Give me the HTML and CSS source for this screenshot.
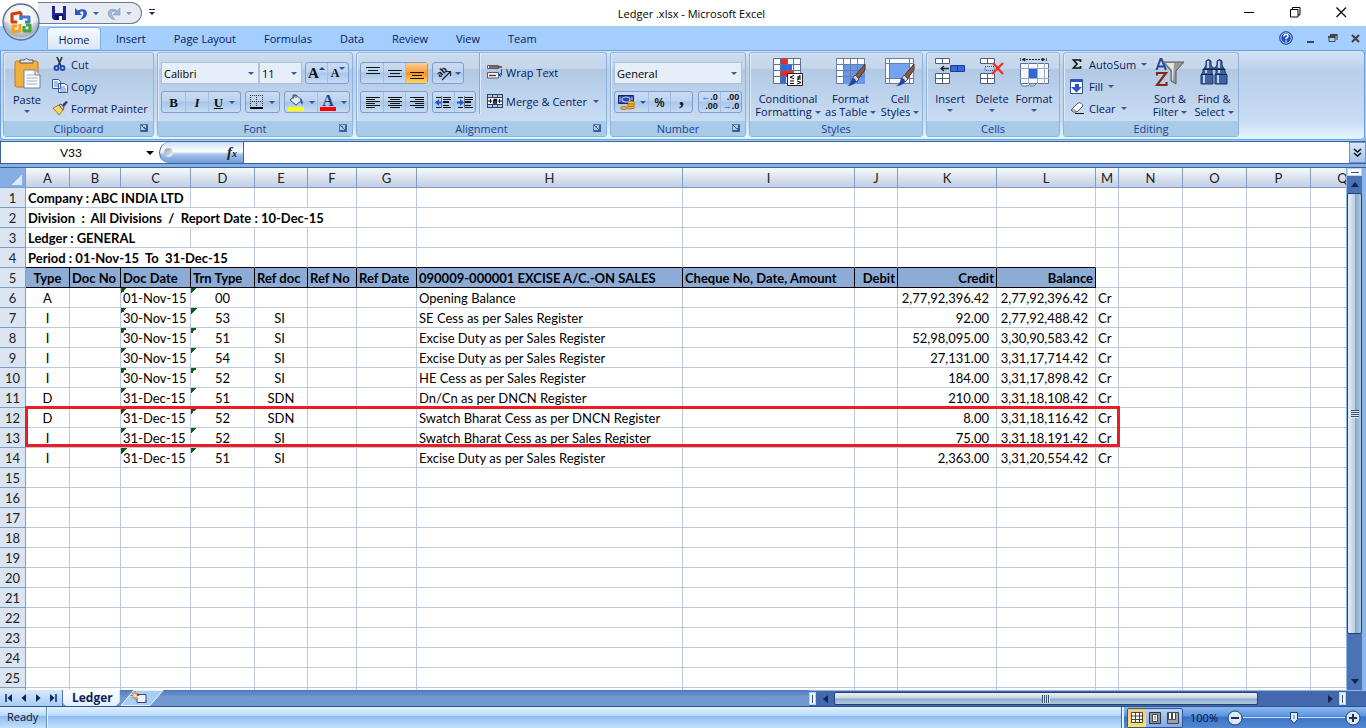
FILE: index.html
```html
<!DOCTYPE html>
<html lang="en">
<head>
<meta charset="utf-8">
<title>Ledger .xlsx - Microsoft Excel</title>
<link rel="stylesheet" href="styles.css">
</head>
<body>
<div class="app">
<header class="titlebar">
  <button class="office" aria-label="Office Button">
    <svg width="40" height="42" viewBox="0 0 40 42">
      <defs><radialGradient id="orb" cx=".5" cy=".35" r=".68"><stop offset="0" stop-color="#fff"/><stop offset=".5" stop-color="#e4e7ed"/><stop offset=".8" stop-color="#a4b0c2"/><stop offset="1" stop-color="#e8f2fb"/></radialGradient></defs>
      <circle cx="21" cy="22" r="18" fill="url(#orb)" stroke="#5c6f8c" stroke-width="1.3"/>
      <path d="M4 22a17 17 0 0 1 34 0q-17 5-34 0z" fill="#fff" opacity=".5"/>
      <g fill="none" stroke-width="3" stroke-linejoin="round">
        <path d="M21 19v-5l-1-1.500-8 1.500v8h5" stroke="#d8380c"/>
        <path d="M20 20v-3h8v5h-4" stroke="#3f7ad0" transform="translate(1 0)"/>
        <path d="M20 24v7l-7 1v-6h4" stroke="#f6a413"/>
        <path d="M24 26v5h6v-6h-4" stroke="#43a238"/>
      </g>
    </svg>
  </button>
  <div class="qat">
    <button aria-label="Save"><svg width="14" height="14" viewBox="0 0 14 14"><path d="M0 0h14v14H2l-2-2z" fill="#22229a"/><path d="M3 0h8v7H3z" fill="#e8f0fd"/><path d="M3 9h8v5H3z" fill="#11115c"/><path d="M7 10h3v4H7z" fill="#fff"/></svg></button>
    <button class="undo" aria-label="Undo"><svg width="14" height="13" viewBox="0 0 14 13"><path d="M1 1v7h7L5.500 5.500Q9 3 9.500 6 9.500 9 6 13q7-2 7-7Q12 0 3.500 3.500z" fill="#2b55c0"/></svg><i class="dd"></i></button>
    <button class="redo" aria-label="Redo"><svg width="14" height="13" viewBox="0 0 14 13"><path d="M13 1v7H6l2.500-2.500Q5 3 4.500 6 4.500 9 8 13 1 11 1 6 2 0 10.500 3.500z" fill="#a3b7d4" stroke="#7f98bd" stroke-width=".6"/></svg><i class="dd gray"></i></button>
  </div>
  <button class="qat-more" aria-label="Customize Quick Access Toolbar"><i class="dd dark"></i></button>
  <h1>Ledger .xlsx - Microsoft Excel</h1>
  <div class="winbtns">
    <button aria-label="Minimize"><svg width="11" height="11"><path d="M0 5.500h10" stroke="#000"/></svg></button>
    <button aria-label="Restore"><svg width="11" height="11"><path d="M.5 2.500h7.500v7.500H.5zM2.500 2.500v-2h7.500v7.500H8" fill="none" stroke="#000"/></svg></button>
    <button aria-label="Close"><svg width="11" height="11"><path d="M.5.500l9.500 9.500M10 .5L.5 10" stroke="#000" stroke-width="1.200"/></svg></button>
  </div>
</header>
<nav class="tabs">
  <button class="on">Home</button><button>Insert</button><button>Page Layout</button><button>Formulas</button><button>Data</button><button>Review</button><button>View</button><button>Team</button>
  <div class="docbtns">
    <button aria-label="Help"><svg width="14" height="14" viewBox="0 0 14 14"><circle cx="7" cy="7" r="6.300" fill="#1f50c6" stroke="#24479c"/><circle cx="7" cy="7" r="5.200" fill="none" stroke="#dbe8ff" stroke-width=".8"/><path d="M5 5.500q0-2 2-2t2 1.700Q9 6.300 7 7.200v1M7 9.500v1.300" fill="none" stroke="#fff" stroke-width="1.500"/></svg></button>
    <button aria-label="Minimize window"><svg width="9" height="11"><path d="M1 9h7" stroke="#444" stroke-width="2"/></svg></button>
    <button aria-label="Restore window"><svg width="10" height="11"><path d="M1 4h6v4.500H1z" fill="#a3ceff" stroke="#444"/><path d="M0 4h7.500M2 2h7.500" stroke="#444" stroke-width="2"/><path d="M9 2v5" stroke="#444"/></svg></button>
    <button aria-label="Close window"><svg width="9" height="11"><path d="M1 2l7 7M8 2L1 9" stroke="#444" stroke-width="2.200"/></svg></button>
  </div>
</nav>
<section class="ribbon">
  <section class="group clipboard"><div class="body">
    <button class="big"><svg width="27" height="31" viewBox="0 0 27 31"><rect x="1" y="3" width="23" height="26" rx="2" fill="#f0ae3c" stroke="#bd7d1c"/><path d="M6 5V2h4q2.500-3 5 0h4v3z" fill="#e8e8e8" stroke="#555"/><path d="M10 12h11l5 5v13H10z" fill="#fff" stroke="#6f8095"/><path d="M12.500 17h8M12.500 20h11M12.500 23h11M12.500 26h11" stroke="#94a9c4"/><path d="M21 12v5h5" fill="#dfe8f3" stroke="#6f8095"/></svg><span>Paste</span><i class="dd"></i></button>
    <div class="stack">
      <button><svg width="16" height="16" viewBox="0 0 16 16"><path d="M5 1l4 9M10 1l-4 9" stroke="#333c55" stroke-width="1.800"/><g fill="none" stroke="#2347b8" stroke-width="1.900"><circle cx="4.500" cy="12" r="2"/><circle cx="10.500" cy="12" r="2"/></g></svg>Cut</button>
      <button><svg width="16" height="16" viewBox="0 0 16 16"><path d="M.5 1.500h6l2 2v7h-8zM6.500 5.500h6l3 2v7h-9z" fill="#fff" stroke="#31559f"/><path d="M2 4h4M2 6h4M2 8h4M8 9h5M8 11h6M8 13h6" stroke="#4f7fd6"/></svg>Copy</button>
      <button><svg width="16" height="16" viewBox="0 0 16 16"><path d="M1 8l6-3 4 5-4 5q-2-3-6-7z" fill="#f6d766" stroke="#a87c25"/><path d="M7 5l2-1 3 4-1 2z" fill="#e9e9e9" stroke="#555"/><path d="M10 5l4-4 2 1-4 5z" fill="#40307f"/></svg>Format Painter</button>
    </div></div>
    <footer>Clipboard<button class="launch" aria-label="Clipboard options"></button></footer>
  </section>
  <section class="group font"><div class="body rows">
    <div class="row">
      <label class="combo face"><select aria-label="Font"><option>Calibri</option></select><i class="dd"></i></label>
      <label class="combo size"><select aria-label="Font size"><option>11</option></select><i class="dd"></i></label>
      <div class="bg last w22"><button class="serif grow" aria-label="Grow font">A<i class="dd up"></i></button><button class="serif shrink" aria-label="Shrink font">A<i class="dd"></i></button></div>
    </div>
    <div class="row">
      <div class="bg biu"><button class="serif"><b>B</b></button><button class="serif"><em>I</em></button><button class="serif under"><u>U</u><i class="dd"></i></button></div>
      <div class="bg"><button class="split" aria-label="Borders"><svg width="14" height="14"><path d="M.5 0v12M6.500 0v12M12.500 0v12M0 .5h13M0 6.500h13" stroke="#333" stroke-dasharray="1 1"/><path d="M0 13h13" stroke="#000" stroke-width="2"/></svg><i class="dd"></i></button></div>
      <div class="bg last"><button class="split" aria-label="Fill color"><svg width="16" height="17"><path d="M2 6l6-5 6 5-6 5z" fill="#e4ecf7" stroke="#374a6f"/><path d="M5 5V1h3v3" fill="none" stroke="#374a6f"/><path d="M12 5q4 1 2.500 6Q12 9 12 5z" fill="#2c5cc8"/><path d="M0 13h16v4H0z" fill="#ff0"/></svg><i class="dd"></i></button><button class="split serif" aria-label="Font color"><span class="fc">A</span><i class="dd"></i></button></div>
    </div></div>
    <footer>Font<button class="launch" aria-label="Font options"></button></footer>
  </section>
  <section class="group align"><div class="body">
    <div class="rows">
      <div class="row">
        <div class="bg w23"><button aria-label="Top align"><svg width="15" height="14"><path d="M1 1.500h14M3 4.500h10M1 7.500h14" stroke="#111"/></svg></button><button aria-label="Middle align"><svg width="15" height="14"><path d="M1 4.500h14M3 7.500h10M1 10.500h14" stroke="#111"/></svg></button><button class="sel" aria-label="Bottom align"><svg width="15" height="14"><path d="M1 6.500h14M3 9.500h10M1 12.500h14" stroke="#111"/></svg></button></div>
        <div class="bg"><button class="split orient" aria-label="Orientation"><svg width="18" height="18" viewBox="0 0 18 18"><path d="M7 16l8-8M11 7.500h4.500V12" fill="none" stroke="#222" stroke-width="1.200"/><text x="0" y="0" transform="translate(5 14) rotate(-45)" class="ab">ab</text></svg><i class="dd"></i></button></div>
      </div>
      <div class="row">
        <div class="bg w23"><button aria-label="Align left"><svg width="15" height="13"><path d="M1 1.500h14M1 3.500h9M1 5.500h14M1 7.500h9M1 9.500h14M1 11.500h9" stroke="#111"/></svg></button><button aria-label="Center"><svg width="15" height="13"><path d="M1 1.500h14M3 3.500h10M1 5.500h14M3 7.500h10M1 9.500h14M3 11.500h10" stroke="#111"/></svg></button><button aria-label="Align right"><svg width="15" height="13"><path d="M1 1.500h14M6 3.500h9M1 5.500h14M6 7.500h9M1 9.500h14M6 11.500h9" stroke="#111"/></svg></button></div>
        <div class="bg w22"><button aria-label="Decrease indent"><svg width="17" height="13"><path d="M1 1.500h5M8 1.500h8M8 3.500h8M8 6h5M8 9.500h6M1 11.500h5M8 11.500h8" stroke="#111"/><path d="M8 6h6" stroke="#111" stroke-width="2"/><path d="M6.500.500v12" stroke="#111" stroke-dasharray="1 1"/><path d="M6 6.500H2" stroke="#2753c4" stroke-width="2"/><path d="M4 3v7L0 6.500z" fill="#2753c4"/></svg></button><button aria-label="Increase indent"><svg width="17" height="13"><path d="M1 1.500h5M8 1.500h8M8 3.500h8M8 9.500h6M1 11.500h5M8 11.500h8" stroke="#111"/><path d="M8 6h6" stroke="#111" stroke-width="2"/><path d="M7.500.500v12" stroke="#111" stroke-dasharray="1 1"/><path d="M0 6.500h4" stroke="#2753c4" stroke-width="2"/><path d="M3 3v7l4-3.500z" fill="#2753c4"/></svg></button></div>
      </div>
    </div>
    <div class="wrapcol">
      <button><svg width="16" height="16" viewBox="0 0 16 16"><path d="M.5 1.500h11v3H.5zM.5 8.500h11v5.500H.5z" fill="#fff" stroke="#4b5c7d"/><path d="M2 3h13M2 11.500h7" stroke="#7a2c1d" stroke-width="1.400"/><path d="M14.500 5v6h-2M14 9l-2 2 2 2" fill="none" stroke="#274a9b"/></svg>Wrap Text</button>
      <button><svg width="16" height="16" viewBox="0 0 16 16"><path d="M0 1h16v14H0z" fill="#2c3f66"/><path d="M1 2h4v2H1zM6 2h4v2H6zM11 2h4v2h-4zM1 12h4v2H1zM6 12h4v2H6zM11 12h4v2h-4z" fill="#b8c9e2"/><path d="M1 5h14v6H1z" fill="#fff"/><path d="M1 8h4M15 8h-4M3.500 6v4M12.500 6v4" stroke="#111"/><path d="M6.500 6.500h3v3.500h-3V8h3" fill="none" stroke="#111" stroke-width="1.300"/></svg>Merge &amp; Center<i class="dd"></i></button>
    </div></div>
    <footer>Alignment<button class="launch" aria-label="Alignment options"></button></footer>
  </section>
  <section class="group number"><div class="body rows">
    <div class="row"><label class="combo fmt"><select aria-label="Number format"><option>General</option></select><i class="dd"></i></label></div>
    <div class="row">
      <div class="bg w23"><button class="split cur" aria-label="Accounting format"><svg width="17" height="16" viewBox="0 0 17 16"><path d="M.5 1.500h15v8H.5z" fill="#2747a5" stroke="#15275f"/><ellipse cx="8" cy="5.500" rx="4" ry="2.500" fill="none" stroke="#b6cdf6" stroke-width="1.200"/><path d="M2 3v5M14 3v3" stroke="#b6cdf6"/><g fill="#f6b73c" stroke="#a4650e" stroke-width=".8"><ellipse cx="13" cy="13.500" rx="3.500" ry="1.500"/><ellipse cx="13" cy="11" rx="3.500" ry="1.500"/><ellipse cx="13" cy="8.500" rx="3.500" ry="1.500"/><ellipse cx="6" cy="14" rx="3.500" ry="1.500"/></g></svg><i class="dd"></i></button><button class="pct">%</button><button class="serif comma">,</button></div>
      <div class="bg last w22 dec"><button aria-label="Increase decimal"><span><b>←</b>.0<br>.00</span></button><button aria-label="Decrease decimal"><span>.00<br><b>→</b>.0</span></button></div>
    </div></div>
    <footer>Number<button class="launch" aria-label="Number options"></button></footer>
  </section>
  <section class="group styles"><div class="body">
    <button class="big"><svg width="30" height="30" viewBox="0 0 30 30"><path d="M.5.500h27v25H.5z" fill="#f7fafe" stroke="#5c6f94"/><path d="M8 1h6v5H8zM8 13h12v6H8z" fill="#ef2a1c"/><path d="M8 7h11v5H8zM8 19h5v6H8z" fill="#3568dd"/><path d="M7.500 0v26M14.500 0v26M20.500 0v26M0 6.500h28M0 12.500h28M0 18.500h28" stroke="#5c6f94"/><path d="M14.500 15.500h15v12h-15z" fill="#fff" stroke="#222"/><path d="M21 17.500l-4 1.700 4 1.700M17 23h4M24 19h4M24 21h4M27 17l-2 5M17 25.500h4M24 23l4 1.500-4 1.500" fill="none" stroke="#000"/></svg><span>Conditional<br>Formatting <i class="dd"></i></span></button>
    <button class="big"><svg width="30" height="30" viewBox="0 0 30 30"><path d="M.5.500h28v25H.5z" fill="#f7fafe" stroke="#6b7d9e"/><path d="M7 7h22v19H7z" fill="#6597ef"/><path d="M7.500 0v26M14.500 0v26M21.500 0v26M0 6.500h29M0 12.500h29M0 18.500h29" stroke="#6b7d9e"/><path d="M29 6L19 18l3 3 7-9z" fill="#8a5b3c" stroke="#463226"/><path d="M19 17l4 4-3 3-4-3z" fill="#d6d6d6" stroke="#555"/><path d="M16 20q4 0 4 4-3 4-9 4 4-2 5-8z" fill="#2145a5"/></svg><span>Format<br>as Table <i class="dd"></i></span></button>
    <button class="big"><svg width="30" height="30" viewBox="0 0 30 30"><path d="M.5.500h28v25H.5z" fill="#f7fafe" stroke="#6b7d9e"/><path d="M5 5h19v16H5z" fill="#76a2f3"/><path d="M4.500 0v26M24.500 0v26M0 5.500h29M0 20.500h29" stroke="#6b7d9e"/><path d="M29 6L19 18l3 3 7-9z" fill="#8a5b3c" stroke="#463226"/><path d="M19 17l4 4-3 3-4-3z" fill="#d6d6d6" stroke="#555"/><path d="M16 20q4 0 4 4-3 4-9 4 4-2 5-8z" fill="#2145a5"/></svg><span>Cell<br>Styles <i class="dd"></i></span></button></div>
    <footer>Styles</footer>
  </section>
  <section class="group cells"><div class="body">
    <button class="big"><svg width="31" height="30" viewBox="0 0 31 30"><path d="M.5.500h14v5H.5zM7.500 0v6M.5 15.500h14v10H.5zM7.500 15v11M0 20.500h15" fill="#fff" stroke="#4e5f82"/><path d="M15.500 7.500h14v6h-14zM22.500 7v7" fill="#3769d9" stroke="#1f3d8c"/><path d="M14 10.500H6M9 8l-3 2.500L9 13" fill="none" stroke="#222" stroke-width="1.300"/></svg><span>Insert</span><i class="dd"></i></button>
    <button class="big"><svg width="31" height="30" viewBox="0 0 31 30"><path d="M3.500.500h14v5h-14zM10.500 0v6M3.500 15.500h14v10h-14zM10.500 15v11M3 20.500h15" fill="#fff" stroke="#4e5f82"/><path d="M8 8.500h9v4H8z" fill="none" stroke="#2552c0" stroke-dasharray="1 1"/><path d="M16 5l10 11M26 5L15 16" stroke="#ee3323" stroke-width="2.400"/></svg><span>Delete</span><i class="dd"></i></button>
    <button class="big"><svg width="31" height="30" viewBox="0 0 31 30"><path d="M4 1.500h21" stroke="#222" stroke-dasharray="2 1"/><path d="M1.500 0v3M27.500 0v3M6 0L3 1.500 6 3zM23 0l3 1.500L23 3z" fill="#222" stroke="#222" stroke-width=".7"/><path d="M1.500 5.500h28v20h-28z" fill="#f7fafe" stroke="#5c6f94"/><path d="M10 11h8v9h-8z" fill="#3566d8"/><path d="M9.500 5v21M18.500 5v21M25.500 5v21M1 10.500h29M1 20.500h29" stroke="#9babc6"/><path d="M2 26q0 2 2 2h5l2-2M11 28h4l2-2" fill="#f7fafe" stroke="#5c6f94"/></svg><span>Format</span><i class="dd"></i></button></div>
    <footer>Cells</footer>
  </section>
  <section class="group editing"><div class="body">
    <div class="stack">
      <button><svg width="14" height="16" viewBox="0 0 14 16"><path d="M10.500 6V4H3.500L7 8l-3.500 4h7v-2" fill="none" stroke="#111" stroke-width="1.700"/></svg>AutoSum<i class="dd"></i></button>
      <button><svg width="14" height="16" viewBox="0 0 14 16"><path d="M.5 1.500h12v14H.5z" fill="#fff" stroke="#31508c"/><path d="M1 1h11v3H1z" fill="#2a56be"/><path d="M5 6h4v3h3l-5.500 5.500L1 9h4z" fill="#2456d4"/></svg>Fill<i class="dd"></i></button>
      <button><svg width="14" height="16" viewBox="0 0 14 16"><path d="M1 10l7-7q4-1 5 3l-6 6q-5 1-6-2z" fill="#fff" stroke="#59616f"/><path d="M1 10q4-1 6 2" fill="none" stroke="#59616f"/><path d="M5 13.500h9" stroke="#000"/></svg>Clear<i class="dd"></i></button>
    </div>
    <button class="big"><svg width="30" height="30" viewBox="0 0 30 30"><path d="M1.500 12L5.500 1h1l4.500 11M3 8.500h6.500" fill="none" stroke="#26489f" stroke-width="2"/><path d="M2 17.500V15h9L2 27h9.500v-3" fill="none" stroke="#87261c" stroke-width="2.200"/><path d="M8 4h21l-8 9v13l-5-3V13z" fill="#9a9a98" stroke="#5a5a58"/><path d="M11 5h8l-1 18-1-1V12z" fill="#e3e3e0"/></svg><span>Sort &amp;<br>Filter <i class="dd"></i></span></button>
    <button class="big"><svg width="30" height="30" viewBox="0 0 30 30"><g fill="#41639f" stroke="#1e3466"><path d="M7 3q2.500-3 5 0v4l2 3h2l2-3V3q2.500-3 5 0v4l2 4H5l2-4z"/><path d="M4 11h9v4l1 2v9H2v-9l2-3zM17 11h9v3l2 3v9H16v-9l1-2z"/></g><path d="M2 16.500h12M16 16.500h12M4 11.500h22" stroke="#122349"/><path d="M5 17v8M19 17v8M9 3v7M20 3v7M7 12v3M20 12v3" stroke="#bcd0f2" stroke-width="2"/></svg><span>Find &amp;<br>Select <i class="dd"></i></span></button></div>
    <footer>Editing</footer>
  </section>
</section>
<div class="formula">
  <label class="namebox"><input value="V33" aria-label="Name Box"><i class="dd black"></i></label>
  <div class="fxbar"><i class="knob"></i><button class="fx" aria-label="Insert Function">f<sub>x</sub></button></div>
  <input class="fin" aria-label="Formula bar">
  <button class="expand" aria-label="Expand formula bar"><svg width="9" height="10"><path d="M1 1l3.500 3L8 1M1 5l3.500 3L8 5" fill="none" stroke="#111" stroke-width="1.600"/></svg></button>
</div>
<main class="work">
  <div class="sheet">
  <table>
    <colgroup><col class="c-r"><col class="c-a"><col class="c-b"><col class="c-c"><col class="c-d"><col class="c-e"><col class="c-f"><col class="c-g"><col class="c-h"><col class="c-i"><col class="c-j"><col class="c-k"><col class="c-k"><col class="c-m"><col class="c-n"><col class="c-n"><col class="c-n"><col class="c-n"></colgroup>
    <thead><tr><th class="corner"></th><th>A</th><th>B</th><th>C</th><th>D</th><th>E</th><th>F</th><th>G</th><th>H</th><th>I</th><th>J</th><th>K</th><th>L</th><th>M</th><th>N</th><th>O</th><th>P</th><th>Q</th></tr></thead>
    <tbody>
    <tr><th>1</th><td colspan="3" class="t">Company : ABC INDIA LTD</td><td></td><td></td><td></td><td></td><td></td><td></td><td></td><td></td><td></td><td></td><td></td><td></td><td></td><td></td></tr>
    <tr><th>2</th><td colspan="6" class="t">Division&nbsp; :&nbsp; All Divisions&nbsp; /&nbsp; Report Date : 10-Dec-15</td><td></td><td></td><td></td><td></td><td></td><td></td><td></td><td></td><td></td><td></td><td></td></tr>
    <tr><th>3</th><td colspan="3" class="t">Ledger : GENERAL</td><td></td><td></td><td></td><td></td><td></td><td></td><td></td><td></td><td></td><td></td><td></td><td></td><td></td><td></td></tr>
    <tr><th>4</th><td colspan="4" class="t k">Period : 01-Nov-15&nbsp; To&nbsp; 31-Dec-15</td><td class="k"></td><td class="k"></td><td class="k"></td><td class="k"></td><td class="k"></td><td class="k"></td><td class="k"></td><td class="k"></td><td></td><td></td><td></td><td></td><td></td></tr>
    <tr class="head"><th>5</th><td class="c">Type</td><td>Doc No</td><td>Doc Date</td><td>Trn Type</td><td>Ref doc</td><td>Ref No</td><td>Ref Date</td><td>090009-000001 EXCISE A/C.-ON SALES</td><td>Cheque No, Date, Amount</td><td class="r">Debit</td><td class="r">Credit</td><td class="r">Balance</td><td class="p"></td><td class="p"></td><td class="p"></td><td class="p"></td><td class="p"></td></tr>
    <tr><th>6</th><td class="c">A</td><td></td><td class="x">01-Nov-15</td><td class="x c">00</td><td></td><td></td><td></td><td>Opening Balance</td><td></td><td></td><td class="n">2,77,92,396.42</td><td class="n">2,77,92,396.42</td><td>Cr</td><td></td><td></td><td></td><td></td></tr>
    <tr><th>7</th><td class="c">I</td><td></td><td class="x">30-Nov-15</td><td class="x c">53</td><td class="c s">SI</td><td></td><td></td><td>SE Cess as per Sales Register</td><td></td><td></td><td class="n">92.00</td><td class="n">2,77,92,488.42</td><td>Cr</td><td></td><td></td><td></td><td></td></tr>
    <tr><th>8</th><td class="c">I</td><td></td><td class="x">30-Nov-15</td><td class="x c">51</td><td class="c s">SI</td><td></td><td></td><td>Excise Duty as per Sales Register</td><td></td><td></td><td class="n">52,98,095.00</td><td class="n">3,30,90,583.42</td><td>Cr</td><td></td><td></td><td></td><td></td></tr>
    <tr><th>9</th><td class="c">I</td><td></td><td class="x">30-Nov-15</td><td class="x c">54</td><td class="c s">SI</td><td></td><td></td><td>Excise Duty as per Sales Register</td><td></td><td></td><td class="n">27,131.00</td><td class="n">3,31,17,714.42</td><td>Cr</td><td></td><td></td><td></td><td></td></tr>
    <tr><th>10</th><td class="c">I</td><td></td><td class="x">30-Nov-15</td><td class="x c">52</td><td class="c s">SI</td><td></td><td></td><td>HE Cess as per Sales Register</td><td></td><td></td><td class="n">184.00</td><td class="n">3,31,17,898.42</td><td>Cr</td><td></td><td></td><td></td><td></td></tr>
    <tr><th>11</th><td class="c">D</td><td></td><td class="x">31-Dec-15</td><td class="x c">51</td><td class="c">SDN</td><td></td><td></td><td>Dn/Cn as per DNCN Register</td><td></td><td></td><td class="n">210.00</td><td class="n">3,31,18,108.42</td><td>Cr</td><td></td><td></td><td></td><td></td></tr>
    <tr><th>12</th><td class="c">D</td><td></td><td class="x">31-Dec-15</td><td class="x c">52</td><td class="c">SDN</td><td></td><td></td><td>Swatch Bharat Cess as per DNCN Register</td><td></td><td></td><td class="n">8.00</td><td class="n">3,31,18,116.42</td><td>Cr</td><td></td><td></td><td></td><td></td></tr>
    <tr><th>13</th><td class="c">I</td><td></td><td class="x">31-Dec-15</td><td class="x c">52</td><td class="c s">SI</td><td></td><td></td><td>Swatch Bharat Cess as per Sales Register</td><td></td><td></td><td class="n">75.00</td><td class="n">3,31,18,191.42</td><td>Cr</td><td></td><td></td><td></td><td></td></tr>
    <tr><th>14</th><td class="c">I</td><td></td><td class="x">31-Dec-15</td><td class="x c">51</td><td class="c s">SI</td><td></td><td></td><td>Excise Duty as per Sales Register</td><td></td><td></td><td class="n">2,363.00</td><td class="n">3,31,20,554.42</td><td>Cr</td><td></td><td></td><td></td><td></td></tr>
    <tr><th>15<td><td><td><td><td><td><td><td><td><td><td><td><td><td><td><td><td></tr>
    <tr><th>16<td><td><td><td><td><td><td><td><td><td><td><td><td><td><td><td><td></tr>
    <tr><th>17<td><td><td><td><td><td><td><td><td><td><td><td><td><td><td><td><td></tr>
    <tr><th>18<td><td><td><td><td><td><td><td><td><td><td><td><td><td><td><td><td></tr>
    <tr><th>19<td><td><td><td><td><td><td><td><td><td><td><td><td><td><td><td><td></tr>
    <tr><th>20<td><td><td><td><td><td><td><td><td><td><td><td><td><td><td><td><td></tr>
    <tr><th>21<td><td><td><td><td><td><td><td><td><td><td><td><td><td><td><td><td></tr>
    <tr><th>22<td><td><td><td><td><td><td><td><td><td><td><td><td><td><td><td><td></tr>
    <tr><th>23<td><td><td><td><td><td><td><td><td><td><td><td><td><td><td><td><td></tr>
    <tr><th>24<td><td><td><td><td><td><td><td><td><td><td><td><td><td><td><td><td></tr>
    <tr><th>25<td><td><td><td><td><td><td><td><td><td><td><td><td><td><td><td><td></tr>
    <tr><th><td><td><td><td><td><td><td><td><td><td><td><td><td><td><td><td><td></tr>
    </tbody>
  </table>
  <div class="mark"></div>
  </div>
  <div class="vscroll"><i class="vsplit"></i><button aria-label="Scroll up"><i class="tri up"></i></button><div class="vthumb"><i class="grip"></i></div><button aria-label="Scroll down"><i class="tri"></i></button></div>
</main>
<div class="sheetbar">
  <div class="navs">
    <button aria-label="First sheet"><svg width="8" height="8"><path d="M1 0v8" stroke="#0a2460" stroke-width="1.500"/><path d="M7 0v8L2.500 4z" fill="#0a2460"/></svg></button>
    <button aria-label="Previous sheet"><svg width="8" height="8"><path d="M6 0v8L1.500 4z" fill="#0a2460"/></svg></button>
    <button aria-label="Next sheet"><svg width="8" height="8"><path d="M2 0v8l4.500-4z" fill="#0a2460"/></svg></button>
    <button aria-label="Last sheet"><svg width="8" height="8"><path d="M7 0v8" stroke="#0a2460" stroke-width="1.500"/><path d="M1 0v8l4.500-4z" fill="#0a2460"/></svg></button>
  </div>
  <div class="stabs"><button class="stab">Ledger</button><button class="snew" aria-label="Insert Worksheet"><svg width="45" height="16"><path d="M13.500.500H43L30 15.500H1z" fill="#a9cdf5" stroke="#e6f1fd"/><path d="M16 4.500h10v8h-9v-4" fill="#f2f6fb" stroke="#3b4c70"/><path d="M26 10v2.500h-2.500" stroke="#3b4c70" fill="#bccbe0"/><path d="M15 1v9M10.500 5.500h9M12 2.500l6 6M18 2.500l-6 6" stroke="#d9661b"/><circle cx="15" cy="5.500" r="1.800" fill="#ffe9a8"/></svg></button></div>
  <div class="hscroll"><i class="hsplit"></i><button aria-label="Scroll left"><i class="tri left"></i></button><div class="htrack"><div class="hthumb"><i class="grip v"></i></div></div><button aria-label="Scroll right"><i class="tri right"></i></button><i class="hsplit"></i></div>
</div>
<footer class="status">
  <span class="ready">Ready</span>
  <div class="zoomarea">
    <div class="views">
      <button class="on" aria-label="Normal"><svg width="13" height="12"><path d="M.5.500h11v10H.5zM4.500 0v11M8.500 0v11M0 4h12M0 7.500h12" fill="#fff" stroke="#4c4030"/></svg></button>
      <button aria-label="Page Layout view"><svg width="13" height="12"><path d="M.5.500h11v11H.5z" fill="#8c93a0" stroke="#333"/><path d="M3.500 2.500h5v7h-5z" fill="#fff" stroke="#444"/><path d="M5 5h2M5 7h2" stroke="#666"/></svg></button>
      <button aria-label="Page Break Preview"><svg width="13" height="12"><path d="M.5.500h11v11H.5z" fill="#9aa1ad" stroke="#444"/><path d="M1.500.500h3v7h-3zM5.500.500h3v7h-3z" fill="#fff" stroke="#444"/></svg></button>
    </div>
    <button class="pc">100%</button>
    <button class="round" aria-label="Zoom out"><svg width="16" height="16"><circle cx="8" cy="8" r="7" fill="#dce9f9" stroke="#23406f"/><path d="M4 8h8" stroke="#1d2f50" stroke-width="2"/></svg></button>
    <div class="slider"><svg width="10" height="14"><path d="M1.500 1.500h7v7L5 12.500 1.500 8.500z" fill="#dfeafb" stroke="#1f3d75"/><path d="M5 4v4" stroke="#4a76c4"/></svg></div>
    <button class="round" aria-label="Zoom in"><svg width="16" height="16"><circle cx="8" cy="8" r="7" fill="#dce9f9" stroke="#23406f"/><path d="M4 8h8M8 4v8" stroke="#1d2f50" stroke-width="2"/></svg></button>
  </div>
</footer>
</div>
</body>
</html>
```
FILE: styles.css
```css
* { box-sizing: border-box; }
body { margin: 0; font: 11px/13px "Open Sans", "Noto Sans", sans-serif; color: #06195c; }
button { font: inherit; color: inherit; background: none; border: 0; padding: 0; margin: 0; }
input, select { font: inherit; color: #000; border: 0; padding: 0; margin: 0; border-radius: 0; outline: 0; }
svg { display: block; flex: none; }
.app { height: 100vh; display: flex; flex-direction: column; overflow: hidden; background: #88b0e4; }
.app > * { flex: none; }

.dd { display: inline-block; width: 0; height: 0; border: 3px solid transparent; border-top-color: #33589c; border-bottom: 0; flex: none; }
.dd.up { border: 3px solid transparent; border-bottom-color: #1f3e87; border-top: 0; }
.dd.gray { border-top-color: #8c95a5; }
.dd.black { border-width: 4px 4px 0; border-top-color: #000; }

/* title bar */
.titlebar { position: relative; height: 26px; background: #fff; display: flex; align-items: flex-start; padding-left: 38px; }
.office { position: absolute; left: 0; top: 0; z-index: 3; }
.qat { height: 22px; margin-top: 2px; width: 104px; display: flex; align-items: center; padding-left: 14px; gap: 8px; border: 1px solid #6b7a92; border-left: 0; border-radius: 0 11px 11px 0; background: #e6ebf3; }
.qat button { display: flex; align-items: center; gap: 5px; }
.qat-more { padding: 9px 7px; display: flex; }
.qat-more .dd { border-top-color: #1c2f5c; position: relative; margin-top: 3px; }
.qat-more .dd::before { content: ""; position: absolute; left: -3px; top: -6px; width: 6px; height: 1px; background: #1c2f5c; }
h1 { position: absolute; left: 0; right: 0; top: 6px; margin: 0; padding-left: 17px; text-align: center; font: 11px/15px "Open Sans", sans-serif; color: #000; }
.winbtns { margin-left: auto; display: flex; gap: 35px; padding: 7px 19px 0 0; }

/* tabs */
.tabs { height: 24px; background: #a3ceff; display: flex; padding-left: 47px; gap: 2px; }
.tabs > button { padding: 0 13px; margin-top: 1px; height: 23px; }
.tabs > button.on { padding: 0 10px; width: 54px; background: linear-gradient(#f5f9fe, #d9e6f5); border: 1px solid #7fb0ea; border-bottom: 0; border-radius: 4px 4px 0 0; }
.docbtns { margin-left: auto; display: flex; align-items: center; gap: 13px; padding-right: 6px; }

/* ribbon */
.ribbon { display: flex; gap: 3px; padding: 1px 0 2px 2px; margin-right: 1px; height: 90px; border: 1px solid #6d9fdf; border-radius: 0 4px 4px 4px; background: linear-gradient(#d3e2f3, #c2d5ec 16%, #b9cfea 22%, #c8ddf3 80%, #dff4ff 97%); box-shadow: 0 0 0 1px #a3ceff; }
.group { flex: none; display: flex; flex-direction: column; border: 1px solid #8db2db; border-radius: 3px; background: linear-gradient(#cbdbee, #c6d7eb 18%, #b2c9e5 20%, #c8dcf2 80%); box-shadow: inset 1px 1px 0 #dceafa; overflow: hidden; }
.group .body { flex: 1; display: flex; }
.group footer { height: 15px; background: #a9cbea; text-align: center; color: #1e3f8f; line-height: 15px; position: relative; }
.launch { position: absolute; right: 5px; top: 3px; width: 8px; height: 8px; border: solid #5b7aa9; border-width: 1px 0 0 1px; }
.launch::after { content: ""; position: absolute; right: 0; bottom: 0; width: 5px; height: 5px; border: solid #3d5e96; border-width: 0 2px 2px 0; background: linear-gradient(45deg, transparent 45%, #3d5e96 45% 60%, transparent 60%); }
.clipboard { width: 151px; }
.font { width: 196px; }
.align { width: 251px; }
.number { width: 136px; }
.styles { width: 174px; }
.cells { width: 134px; }
.editing { width: 176px; }
.group .rows { display: flex; flex-direction: column; padding: 9px 3px 0; gap: 7px; }
.row { display: flex; }
.big { display: flex; flex-direction: column; align-items: center; padding-top: 5px; gap: 4px; }
.big .dd { vertical-align: 2px; }
.clipboard .big { width: 46px; }
.clipboard .big, .cells .big { gap: 4px; }
.stack { display: flex; flex-direction: column; }
.stack button { height: 22px; display: flex; align-items: center; gap: 3px; }
.clipboard .stack { padding-left: 2px; }
.styles .body { padding-left: 3px; gap: 1px; }
.styles .big:nth-child(1) { width: 70px; }
.styles .big:nth-child(2) { width: 53px; }
.styles .big:nth-child(3) { width: 44px; }
.cells .body { padding-left: 2px; }
.cells .big { width: 42px; }
.editing .stack { width: 84px; padding-left: 6px; }
.editing .stack button { gap: 5px; }
.editing .big { width: 44px; }

.combo { display: flex; align-items: center; position: relative; height: 22px; border: 1px solid #abc1de; background: #e6eefa; }
.combo select { appearance: none; background: none; width: 100%; height: 20px; padding-left: 2px; }
.combo .dd { position: absolute; right: 4px; }
.face { width: 98px; }
.size { width: 43px; }
.fmt { width: 128px; }
.bg { display: flex; height: 22px; margin-right: 4px; border: 1px solid #7d9fd0; border-radius: 3px; background: linear-gradient(#cadcf3, #bdd3ef 45%, #a9c5e8 50%, #c4dcf5); }
.bg.last { margin-left: auto; margin-right: 0; }
.bg button { display: flex; align-items: center; justify-content: center; position: relative; color: #111; }
.bg button + button { border-left: 1px solid #a3bfe3; }
.w22 button { width: 21px; }
.w23 button { width: 22px; }
.bg .split { width: 33px; gap: 5px; }
.font .last .split { width: 32px; }
.biu button { width: 23px; }
.biu .under { width: 32px; gap: 6px; }
.bg .serif { font-family: "Liberation Serif", serif; font-weight: bold; font-size: 13px; }
.bg .grow { font-size: 15px; }
.grow .dd, .shrink .dd { align-self: flex-start; margin-top: 4px; }
.bg .shrink { font-size: 12px; }
.fc { width: 16px; border-bottom: 4px solid #f00; line-height: 13px; font-size: 16px; color: #26417c; text-align: center; }
.bg .sel { background: linear-gradient(#fbcf91, #fb9b3a 48%, #fd8f1e 50%, #ffd85c); }
.ab { font: bold 9px "Open Sans", sans-serif; fill: #222; }
.bg .orient { width: 30px; gap: 2px; }
.pct { font-weight: 600; font-size: 12px; }
.bg .comma { font-size: 20px; line-height: 6px; align-items: flex-start; padding-top: 3px; }
.dec button { font: bold 9px/9px "Liberation Sans", sans-serif; text-align: right; }
.dec b { color: #2753c4; }
.align .body > .rows { width: 123px; border-right: 1px solid #8aa9cf; margin-bottom: 7px; box-shadow: 1px 0 0 #dceafa; flex: none; }
.wrapcol { display: flex; flex-direction: column; padding: 8px 0 0 7px; gap: 7px; }
.wrapcol button { height: 22px; display: flex; align-items: center; gap: 3px; }
.wrapcol .dd { margin-left: 3px; }

/* formula bar */
.formula { height: 23px; margin-top: 1px; display: flex; border: 1px solid #38609c; border-width: 1px 0 1px 1px; background: #fff; }
.namebox { width: 158px; display: flex; align-items: center; padding-right: 5px; }
.namebox input { width: 100%; min-width: 0; background: none; text-align: center; font: 12px/18px Lato, sans-serif; padding-right: 5px; }
.fxbar { width: 85px; display: flex; align-items: center; justify-content: space-between; border: solid #38609c; border-width: 0 1px 0 1px; border-radius: 11px 0 0 11px; padding: 0 6px 0 4px; background: linear-gradient(#cfe1f8, #fdfeff 45%, #a3c1ec 60%, #6f9bd8); }
.knob { width: 9px; height: 9px; border-radius: 50%; background: linear-gradient(135deg, #8a97ad, #fff); }
.fx { font: italic bold 15px/18px "Liberation Serif", serif; color: #222; }
.fx sub { font-size: 10px; vertical-align: baseline; }
.fin { flex: 1; min-width: 0; padding: 0 4px; }
.expand { width: 17px; display: flex; align-items: center; justify-content: center; border: 1px solid #6f93c8; background: linear-gradient(#d6e6fa, #a5c4ee); }

/* worksheet */
.app > .work { flex: 1 1 0; min-height: 0; display: flex; margin-top: 3px; border-top: 1px solid #38609c; }
.sheet { flex: 1; min-width: 0; position: relative; overflow: hidden; background: #fff; }
table { border-collapse: separate; border-spacing: 0; table-layout: fixed; width: 1375px; font: 13px/18px Lato, Carlito, sans-serif; color: #000; }
.c-r { width: 26px; } .c-a { width: 44px; } .c-b { width: 51px; } .c-c { width: 70px; } .c-d { width: 64px; } .c-e { width: 53px; } .c-f { width: 49px; } .c-g { width: 60px; } .c-h { width: 266px; } .c-i { width: 172px; } .c-j { width: 43px; } .c-k { width: 99px; } .c-m { width: 23px; } .c-n { width: 64px; }
td, th { height: 20px; padding: 0 2px; white-space: nowrap; overflow: hidden; border: solid #bcc8dc; border-width: 0 1px 1px 0; font-weight: normal; text-align: left; }
th { text-align: center; background: #dbe5f2; border-color: #7d9cc6; color: #222; padding: 0; }
thead th { background: linear-gradient(#f7fafd, #dbe3ef 50%, #c2cfe2); }
.corner { background: linear-gradient(135deg, transparent 50%, #dce9fa 50%) 11px 6px / 11px 11px no-repeat, #87aee3; }
.t { font-weight: bold; }
.c { text-align: center; }
.s { padding-right: 5px; }
.r { text-align: right; }
.n { text-align: right; padding-right: 7px; }
.head td { font-weight: bold; background: #8cacd6; border-color: #000; }
.head td.p { background: none; border-color: #bcc8dc; }
td.k { border-bottom-color: #000; }
.x { background: linear-gradient(135deg, #0b5a14 50%, transparent 50%) 0 0 / 6px 6px no-repeat; }
.mark { position: absolute; left: 25px; top: 238px; width: 1095px; height: 41px; border: 3px solid #ed1c24; }

.vscroll { width: 20px; flex: none; display: flex; flex-direction: column; background: #4a72b4; border: solid #8ab6ec; border-width: 0 4px 0 1px; }
.vscroll button { height: 17px; display: flex; align-items: center; justify-content: center; }
.vsplit { height: 8px; background: linear-gradient(#345693, #345693) center / 8px 1px no-repeat, #fff; border: 1px solid #b9d1ee; }
.vthumb { flex: 0 1 441px; border: 1px solid #24406f; border-radius: 2px; background: linear-gradient(90deg, #e6edf4, #bfd0e2 50%, #86a5c8 55%, #b4cae3); display: flex; align-items: center; justify-content: center; }
.vscroll button:last-child { margin-top: auto; }
.grip { width: 8px; height: 8px; background: repeating-linear-gradient(#39506f 0 1px, #dfe8f2 1px 2px); }
.grip.v { background: repeating-linear-gradient(90deg, #39506f 0 1px, #dfe8f2 1px 2px); }
.tri { border: 4px solid transparent; border-top: 5px solid #13244a; border-bottom: 0; }
.tri.up { border: 4px solid transparent; border-bottom: 5px solid #13244a; border-top: 0; }
.tri.left { border: 4px solid transparent; border-right: 5px solid #13244a; border-left: 0; }
.tri.right { border: 4px solid transparent; border-left: 5px solid #13244a; border-right: 0; }

/* sheet tabs and horizontal scroll bar */
.sheetbar { height: 16px; display: flex; background: linear-gradient(#4f79bf, #7299d1 45%, #6f97d0); }
.navs { width: 63px; display: flex; align-items: center; justify-content: space-around; padding: 0 2px; background: linear-gradient(#d6e7fb, #a8ccf5); border-right: 1px solid #4c76b5; }
.stabs { display: flex; }
.stab { padding: 0 7px 0 9px; background: linear-gradient(#fff, #e2edfb); font: bold 12px/16px "Open Sans", sans-serif; color: #0b1f5c; clip-path: polygon(0 0, 100% 0, 100% 12px, calc(100% - 4px) 100%, 3px 100%, 0 13px); }
.snew { display: flex; }
.hscroll { margin-left: auto; width: 557px; display: flex; align-items: stretch; padding: 1px 20px 1px 0; background: #4468ac; border-top: 1px solid #8ab6ec; }
.hscroll button { width: 18px; display: flex; align-items: center; justify-content: center; }
.hsplit { width: 7px; background: linear-gradient(#345693, #345693) center / 1px 8px no-repeat, #eef5fd; border: 1px solid #b9d1ee; }
.htrack { flex: 1; display: flex; }
.hthumb { width: 87%; border: 1px solid #24406f; border-radius: 2px; background: linear-gradient(#eef1f4, #c7d4e2 45%, #8fabc9 55%, #b4cae3); display: flex; align-items: center; justify-content: center; }

/* status bar */
.status { height: 22px; display: flex; align-items: stretch; background: linear-gradient(#e3f1ff, #b9dafd 40%, #8fbcf0 45%, #c4e0fd); border-top: 1px solid #2c5394; color: #0b1230; }
.ready { width: 47px; padding: 3px 0 0 7px; border-right: 1px solid #6590c9; box-shadow: 1px 0 0 #e9f4ff; }
.zoomarea { margin-left: auto; display: flex; align-items: center; padding: 0 5px 0 3px; border-left: 2px solid #e3f1ff; box-shadow: -1px 0 0 #3c68ab; background: linear-gradient(#8cb8f0, #5f97e0 40%, #3c74c9 50%, #5287d2); }
.views { display: flex; border: 1px solid #2e57a0; border-radius: 2px; background: linear-gradient(#b9d2f4, #7faae4); }
.views button { width: 18px; height: 18px; display: flex; align-items: center; justify-content: center; }
.views .on { background: linear-gradient(#f9c679, #ffdf6e); }
.pc { width: 42px; text-align: center; margin-right: 2px; }
.slider { width: 102px; display: flex; align-items: center; justify-content: center; background: linear-gradient(#cfe2fb, #cfe2fb) center / 100% 1px no-repeat; }
```
